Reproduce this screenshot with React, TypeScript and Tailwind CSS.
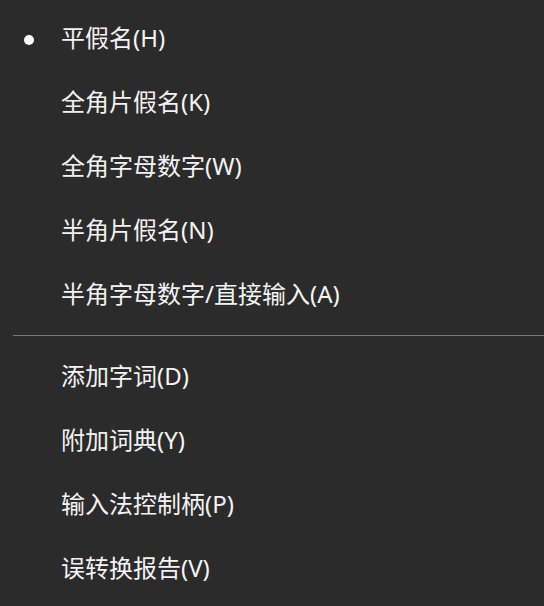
const items1 = [
  { label: "平假名(H)", checked: true },
  { label: "全角片假名(K)" },
  { label: "全角字母数字(W)" },
  { label: "半角片假名(N)" },
  { label: "半角字母数字/直接输入(A)" },
];

const items2 = [
  { label: "添加字词(D)" },
  { label: "附加词典(Y)" },
  { label: "输入法控制柄(P)" },
  { label: "误转换报告(V)" },
];

type Item = { label: string; checked?: boolean };

const MenuRow = ({ item }: { item: Item }) => (
  <div className="flex h-16 items-center pb-1">
    <div className="flex w-[61px] shrink-0 justify-center pl-[1px] pr-[5px] pt-1">
      {item.checked && <span className="block h-[10px] w-[10px] rounded-full bg-white" />}
    </div>
    <span className="text-[24px] leading-none text-[#f3f3f3]">{item.label}</span>
  </div>
);

export default function App() {
  return (
    <div
      className="h-[606px] w-[544px] overflow-hidden bg-[#2b2b2b] pt-2"
      style={{ fontFamily: '"Noto Sans", "Noto Sans CJK SC", sans-serif' }}
    >
      {items1.map((it) => (
        <MenuRow key={it.label} item={it} />
      ))}
      <div className="mb-[10px] ml-[13px] mt-[7px] h-px bg-[#7a7a7a]" />
      {items2.map((it) => (
        <MenuRow key={it.label} item={it} />
      ))}
    </div>
  );
}
